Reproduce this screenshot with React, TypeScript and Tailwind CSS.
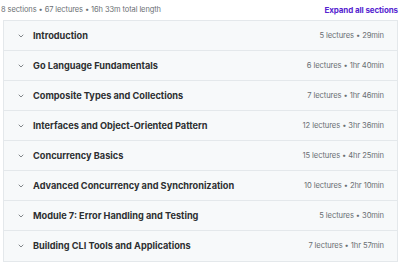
import React from 'react';

const sections = [
  { title: 'Introduction', meta: '5 lectures • 29min' },
  { title: 'Go Language Fundamentals', meta: '6 lectures • 1hr 40min' },
  { title: 'Composite Types and Collections', meta: '7 lectures • 1hr 46min' },
  { title: 'Interfaces and Object-Oriented Pattern', meta: '12 lectures • 3hr 36min' },
  { title: 'Concurrency Basics', meta: '15 lectures • 4hr 25min' },
  { title: 'Advanced Concurrency and Synchronization', meta: '10 lectures • 2hr 10min' },
  { title: 'Module 7: Error Handling and Testing', meta: '5 lectures • 30min' },
  { title: 'Building CLI Tools and Applications', meta: '7 lectures • 1hr 57min' },
];

function Chevron() {
  return (
    <svg width="8" height="8" viewBox="0 0 24 24" fill="none" stroke="#6a6f73" strokeWidth="2.5" strokeLinecap="round" strokeLinejoin="round">
      <path d="M6 9l6 6 6-6" />
    </svg>
  );
}

export default function App() {
  return (
    <div className="w-[400px] h-[262px] bg-white overflow-hidden" style={{ fontFamily: 'Inter, "Noto Sans", sans-serif' }}>
      <div className="flex items-center justify-between h-[20px] pl-[1px] pr-[2px]">
        <span className="text-[7.5px] text-[#6a6f73] tracking-[-0.1px]">8 sections • 67 lectures • 16h 33m total length</span>
        <span className="text-[8px] font-bold text-[#5624d0] tracking-[-0.1px]">Expand all sections</span>
      </div>
      <div className="ml-[3px] mr-[2px] border border-[#e4e8eb]">
        {sections.map((s, i) => (
          <div
            key={i}
            className={`flex items-center h-[30px] bg-[#f7f9fa] pl-[13px] pr-[13px] ${i < sections.length - 1 ? 'border-b border-[#e4e8eb]' : ''}`}
          >
            <Chevron />
            <span className="ml-[8px] text-[9.2px] font-bold text-[#2d2f31]">{s.title}</span>
            <span className="ml-auto text-[7.6px] text-[#6a6f73] tracking-[-0.1px]">{s.meta}</span>
          </div>
        ))}
      </div>
    </div>
  );
}
